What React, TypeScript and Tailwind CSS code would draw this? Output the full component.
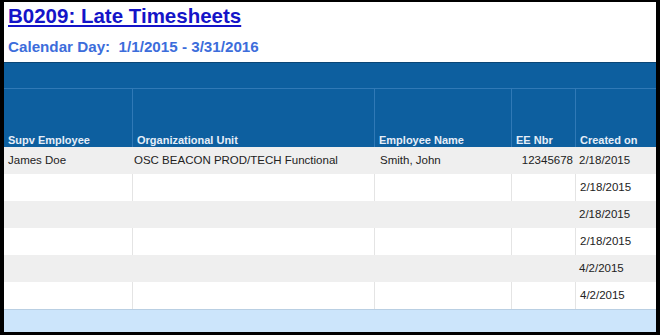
const columns = [
  { key: 'supv', label: 'Supv Employee' },
  { key: 'org', label: 'Organizational Unit' },
  { key: 'name', label: 'Employee Name' },
  { key: 'eeNbr', label: 'EE Nbr' },
  { key: 'created', label: 'Created on' },
];

type Row = { supv: string; org: string; name: string; eeNbr: string; created: string };

const rows: Row[] = [
  { supv: 'James Doe', org: 'OSC BEACON PROD/TECH Functional', name: 'Smith, John', eeNbr: '12345678', created: '2/18/2015' },
  { supv: '', org: '', name: '', eeNbr: '', created: '2/18/2015' },
  { supv: '', org: '', name: '', eeNbr: '', created: '2/18/2015' },
  { supv: '', org: '', name: '', eeNbr: '', created: '2/18/2015' },
  { supv: '', org: '', name: '', eeNbr: '', created: '4/2/2015' },
  { supv: '', org: '', name: '', eeNbr: '', created: '4/2/2015' },
];

const gridCols = 'grid grid-cols-[128px_242px_137px_64px_1fr]';

export default function App() {
  return (
    <div className="h-[335px] w-[660px] bg-black pl-[4px] pr-[4px] pt-[2px] pb-[3px] font-['Liberation_Sans',Arial,sans-serif]">
      <div className="flex h-full flex-col bg-white">
        <div className="h-[60px] px-[4px] pt-[2px]">
          <h1 className="text-[20.5px] font-bold leading-[24px] text-[#1414c8] underline decoration-[2px] underline-offset-[2px]">
            B0209: Late Timesheets
          </h1>
          <p className="mt-[10px] text-[15.2px] font-bold leading-[17px] text-[#3c6ddb]">
            Calendar Day:&nbsp; 1/1/2015 - 3/31/2016
          </p>
        </div>

        {/* blue toolbar strip above the column headers */}
        <div className="h-[26px] border-t border-[#0a4676] bg-[#0d5f9f]" />

        <div className={`${gridCols} h-[59px] border-t border-[#3079b6] bg-[#0d5f9f]`}>
          {columns.map((col, i) => (
            <div
              key={col.key}
              className={`flex items-end px-[4px] pb-0 text-[11px] font-bold leading-[13px] text-[#e6eef8] ${i > 0 ? 'border-l border-[#3079b6]' : ''}`}
            >
              {col.label}
            </div>
          ))}
        </div>

        {rows.map((row, r) => (
          <div key={r} className={`${gridCols} h-[27px] text-[11.5px] text-[#222] ${r % 2 === 0 ? 'bg-[#efefef]' : 'bg-white'}`}>
            <div className="flex items-center px-[4px]">{row.supv}</div>
            <div className={`flex items-center px-[2px] ${r % 2 === 1 ? 'border-l border-[#e4e4e4]' : ''}`}>{row.org}</div>
            <div className={`flex items-center px-[6px] ${r % 2 === 1 ? 'border-l border-[#e4e4e4]' : ''}`}>{row.name}</div>
            <div className={`flex items-center justify-end px-[2px] ${r % 2 === 1 ? 'border-l border-[#e4e4e4]' : ''}`}>{row.eeNbr}</div>
            <div className={`flex items-center px-[4px] ${r % 2 === 1 ? 'border-l border-[#e4e4e4]' : ''}`}>{row.created}</div>
          </div>
        ))}

        <div className="flex-1 border-t border-[#b9cfe3] bg-[#cce5fb]" />
      </div>
    </div>
  );
}
